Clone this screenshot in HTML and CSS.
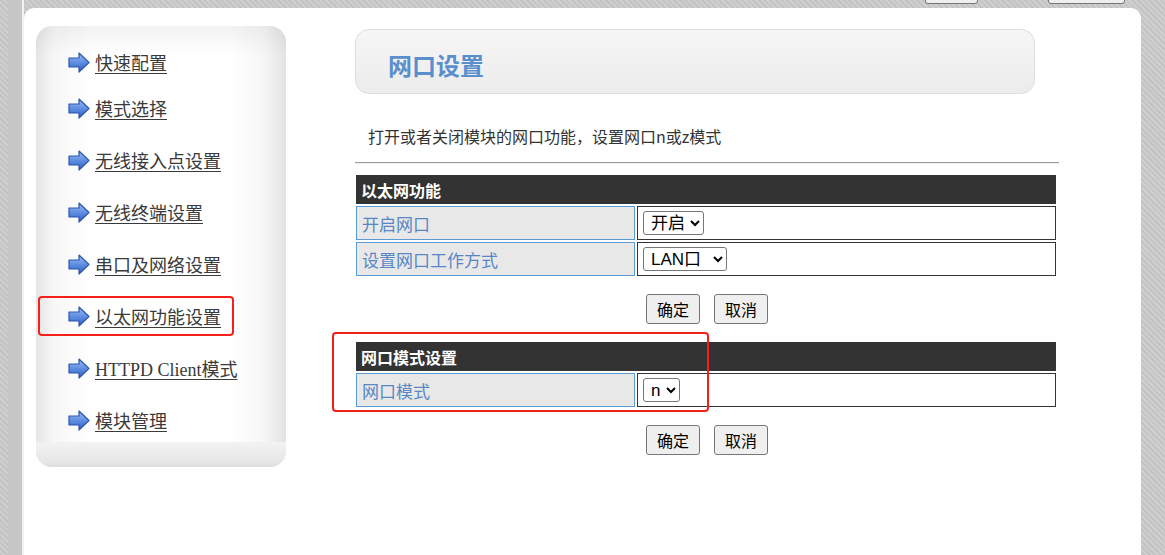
FILE: index.html
```html
<!DOCTYPE html>
<html lang="zh-CN">
<head>
  <meta charset="UTF-8">
  <title>网口设置</title>
  <link rel="stylesheet" href="styles.css">
</head>
<body>
  <div class="edge-left">
    <div class="hatch"></div>
    <div class="bar"></div>
    <div class="line"></div>
  </div>

  <div class="page">
    <div class="topbar">
      <button class="top-btn first"></button>
      <button class="top-btn second"></button>
    </div>

    <div class="panel">
      <div class="sidebar">
        <ul class="menu">
          <li><a href="#"><span class="arrow"></span>快速配置</a></li>
          <li><a href="#"><span class="arrow"></span>模式选择</a></li>
          <li><a href="#"><span class="arrow"></span>无线接入点设置</a></li>
          <li><a href="#"><span class="arrow"></span>无线终端设置</a></li>
          <li><a href="#"><span class="arrow"></span>串口及网络设置</a></li>
          <li class="marked"><a href="#"><span class="arrow"></span>以太网功能设置</a></li>
          <li><a href="#"><span class="arrow"></span>HTTPD Client模式</a></li>
          <li><a href="#"><span class="arrow"></span>模块管理</a></li>
        </ul>
        <div class="side-foot"></div>
      </div>

      <div class="content">
        <div class="title-box">
          <h1>网口设置</h1>
        </div>
        <p class="desc">打开或者关闭模块的网口功能，设置网口n或z模式</p>
        <div class="rule"></div>

        <table class="form-table">
          <tr><th colspan="2">以太网功能</th></tr>
          <tr>
            <td class="label">开启网口</td>
            <td class="value">
              <select><option>开启</option><option>关闭</option></select>
            </td>
          </tr>
          <tr>
            <td class="label">设置网口工作方式</td>
            <td class="value">
              <select><option>LAN口</option><option>WAN口</option></select>
            </td>
          </tr>
        </table>
        <div class="actions">
          <button>确定</button>
          <button>取消</button>
        </div>

        <table class="form-table second">
          <tr><th colspan="2">网口模式设置</th></tr>
          <tr>
            <td class="label">网口模式</td>
            <td class="value">
              <select><option>n</option><option>z</option></select>
            </td>
          </tr>
        </table>
        <div class="actions">
          <button>确定</button>
          <button>取消</button>
        </div>

        <div class="mark-box"></div>
      </div>
    </div>
  </div>

  <div class="edge-right"></div>

  <svg width="0" height="0" class="defs">
    <defs>
      <linearGradient id="arrowFill" x1="0" y1="0" x2="0" y2="1">
        <stop offset="0" stop-color="#9dbcf2"/>
        <stop offset="0.5" stop-color="#5f8ee0"/>
        <stop offset="1" stop-color="#2f5fc0"/>
      </linearGradient>
    </defs>
  </svg>

  <script>
    // same arrow icon in front of every menu link
    const arrowSvg = '<svg width="22" height="21" viewBox="0 0 22 21">' +
      '<path d="M1 6 H11 V1 L21 10.5 L11 20 V15 H1 Z" fill="url(#arrowFill)" stroke="#2c56b0" stroke-width="1.2" stroke-linejoin="round"/>' +
      '</svg>';
    document.querySelectorAll(".arrow").forEach(el => el.innerHTML = arrowSvg);
  </script>
</body>
</html>
```

FILE: styles.css
```css
* {
  box-sizing: border-box;
}
html, body {
  height: 100%;
}
body {
  margin: 0;
  display: flex;
  min-height: 555px;
  overflow: hidden;
  font-family: "Noto Sans CJK SC", "Noto Sans", sans-serif;
  background: repeating-linear-gradient(45deg, #c3c3c3 0 2px, #cfcfcf 2px 4px);
}
.defs {
  position: absolute;
}

/* left border strip */
.edge-left {
  display: flex;
  width: 24px;
  flex: none;
}
.edge-left .hatch {
  width: 8px;
}
.edge-left .bar {
  width: 14px;
  background: #c6c6c6;
}
.edge-left .line {
  width: 2px;
  background: #f1f1f1;
}
.edge-right {
  width: 24px;
  flex: none;
}

.page {
  width: 1117px;
  flex: none;
  display: flex;
  flex-direction: column;
}
.topbar {
  height: 8px;
  display: flex;
  overflow: hidden;
  padding-left: 901px;
}
.top-btn {
  height: 30px;
  margin-top: -26px;
  background: #efefef;
  border: 1px solid #767676;
  border-radius: 3px;
}
.top-btn.first {
  width: 53px;
}
.top-btn.second {
  width: 77px;
  margin-left: 70px;
}

.panel {
  flex: 1;
  background: #fff;
  border-radius: 10px 10px 0 0;
  display: flex;
  align-items: flex-start;
  padding: 18px 0 0 12px;
}

/* sidebar */
.sidebar {
  width: 250px;
  border-radius: 16px;
  background:
    linear-gradient(180deg, rgba(0,0,0,0.05), rgba(0,0,0,0) 30px),
    linear-gradient(90deg, #e5e5e5 0, #f7f7f7 18px, #fff 55px, #fff 195px, #f6f6f6 228px, #e3e3e3 250px);
}
.menu {
  list-style: none;
  margin: 0;
  padding: 10px 0 0 0;
  height: 416px;
}
.menu li {
  height: 52px;
  display: flex;
  align-items: center;
  padding-left: 32px;
}
.menu li:first-child {
  margin-bottom: -6px;
}
.menu a {
  display: flex;
  align-items: center;
  color: #3a3a3a;
  font-family: "Liberation Serif", "Noto Sans CJK SC", serif;
  font-size: 18px;
  text-decoration: underline;
  text-underline-offset: 3px;
}
.arrow {
  display: inline-flex;
  width: 22px;
  height: 21px;
  margin-right: 5px;
}
.menu li.marked {
  padding-left: 2px;
}
.menu li.marked a {
  width: 196px;
  height: 40px;
  padding-left: 28px;
  border: 2px solid #f5201a;
  border-radius: 4px;
}
.side-foot {
  height: 25px;
  border-radius: 0 0 16px 16px;
  background: linear-gradient(180deg, #f3f3f3, #e6e6e6 80%, #dcdcdc);
}

/* main column */
.content {
  position: relative;
  margin: 3px 0 0 69px;
  width: 704px;
}
.title-box {
  width: 680px;
  height: 65px;
  border: 1px solid #dedede;
  border-radius: 14px;
  background: linear-gradient(180deg, #f6f6f6, #ececec);
  display: flex;
  align-items: center;
  padding: 5px 0 0 32px;
}
.title-box h1 {
  margin: 0;
  font-size: 24px;
  color: #5a8fcd;
  font-weight: bold;
}
.desc {
  margin: 31px 0 0 13px;
  line-height: 22px;
  font-size: 16px;
  color: #333;
}
.rule {
  margin-top: 15px;
  border-top: 1px solid #9c9c9c;
  border-bottom: 1px solid #eee;
}

.form-table {
  width: 704px;
  margin: 9px 0 0 -1px;
  border-spacing: 2px;
  font-size: 16px;
}
.form-table.second {
  margin-top: 16px;
}
.form-table th {
  height: 29px;
  padding: 0 5px;
  background: #333;
  color: #fff;
  text-align: left;
  font-weight: bold;
}
.form-table td {
  height: 34px;
  padding: 0 5px;
}
.form-table .label {
  width: 279px;
  background: #e8e8e8;
  border: 1px solid #5b9bd5;
  color: #5887c5;
  font-size: 17px;
}
.form-table .value {
  border: 1px solid #333;
}
select {
  display: block;
  height: 24px;
  font-size: 17px;
  line-height: 20px;
  font-family: "Liberation Sans", "Noto Sans CJK SC", sans-serif;
  padding: 0 2px 0 3px;
  border: 1px solid #767676;
  border-radius: 3px;
  background: #fff;
  color: #000;
}

.actions {
  display: flex;
  justify-content: center;
  gap: 14px;
  margin-top: 16px;
}
.actions button {
  width: 54px;
  height: 30px;
  padding: 0;
  font-size: 16px;
  font-family: "Noto Sans CJK SC", sans-serif;
  background: #efefef;
  border: 1px solid #767676;
  border-radius: 3px;
  color: #000;
}

/* red annotation frame */
.mark-box {
  position: absolute;
  left: -23px;
  top: 303px;
  width: 377px;
  height: 80px;
  border: 2px solid #f5201a;
  border-radius: 4px;
}
```
